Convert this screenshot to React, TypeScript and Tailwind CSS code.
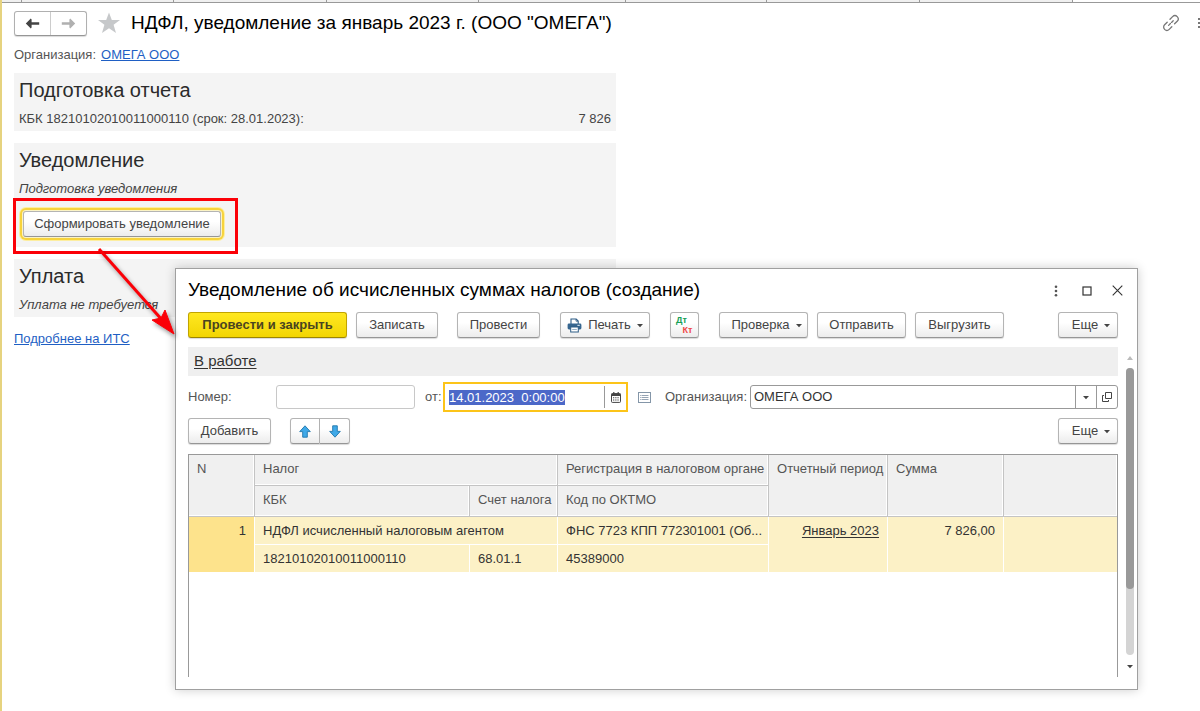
import { useEffect, useRef } from 'react'
import type { ReactNode } from 'react'

const tabs = [
    'w-5', 'w-[152px]', 'w-[153px]', 'w-[152px]',
    'w-[147px]', 'w-[141px]', 'w-[153px]', 'w-[153px]',
]

const buttonBase =
    'flex h-[26px] shrink-0 items-center justify-center rounded-[3px] border border-[#b4b4b4] border-b-[#969696] bg-linear-to-b from-white from-40% to-[#ececec] text-[#444]'

const raised = 'shadow-[0_1px_1px_rgba(0,0,0,0.15)]'

// Default button of the form: gold line inside a pale halo
const focused = 'shadow-[0_0_0_1px_#fbf3c4,0_0_0_3px_#f7d33c,0_0_0_4px_#fdeea0]'

function Button({ className = raised, label, children }: { className?: string; label?: string; children: ReactNode }) {
    return (
        <button type="button" aria-label={label} className={`${buttonBase} ${className}`}>
            {children}
        </button>
    )
}

function Caret() {
    return (
        <svg className="shrink-0" width="6" height="6" viewBox="0 0 6 6" aria-hidden="true">
            <path d="M0 2H6L3 5.2Z" fill="#444" />
        </svg>
    )
}

function NavArrow({ color, flip }: { color: string; flip?: boolean }) {
    return (
        <svg width="15" height="11" viewBox="0 0 15 11" className={flip ? 'rotate-180' : ''} aria-hidden="true">
            <path d="M0.8 5.5 5.8 0.6 6.6 1.4V4.2H14.2V6.8H6.6V9.6L5.8 10.4Z" fill={color} />
        </svg>
    )
}

function BlueArrow({ down }: { down?: boolean }) {
    return (
        <svg width="12" height="13" viewBox="0 0 12 13" className={down ? 'rotate-180' : ''} aria-hidden="true">
            <path d="M6 0.8 11.3 6.6H8.3V12.2H3.7V6.6H0.7Z" fill="#3fa9e8" stroke="#2077ad" strokeWidth="0.9" strokeLinejoin="round" />
        </svg>
    )
}

function Printer() {
    return (
        <svg width="15" height="15" viewBox="0 0 15 15" aria-hidden="true">
            <path d="M4 6V1H9.2L11.2 3V6" fill="#fff" stroke="#2d5c86" strokeWidth="1.1" />
            <path d="M9 1V3.2H11" fill="none" stroke="#2d5c86" strokeWidth="0.8" />
            <rect x="0.6" y="5.5" width="13.8" height="6" rx="1.4" fill="#35658f" />
            <rect x="10.4" y="6.8" width="2.4" height="1.1" fill="#d5e3ee" />
            <rect x="3.7" y="9" width="7.6" height="5" fill="#fff" stroke="#2d5c86" strokeWidth="1" />
            <path d="M5.2 11.5H9.8" stroke="#8da9c1" strokeWidth="0.9" />
        </svg>
    )
}

function Section({ title, className, children }: { title: string; className: string; children: ReactNode }) {
    return (
        <section className={`max-w-[602px] bg-[#f4f4f4] px-[5px] pt-[5px] ${className}`}>
            <h2 className="text-xl leading-6 text-[#2b2b2b]">{title}</h2>
            {children}
        </section>
    )
}

function Toolbar() {
    return (
        <div className="flex items-center pr-[19px]">
            <button type="button" className={`mr-[9px] h-[26px] w-[159px] rounded-[3px] border border-[#c1a400] border-b-[#9c8500] bg-linear-to-b from-[#ffe81f] to-[#f2d500] font-bold text-[#4a4420] ${raised}`}>
                Провести и закрыть
            </button>
            <Button className={`mr-[19px] w-[82px] ${raised}`}>Записать</Button>
            <Button className={`mr-5 w-[83px] ${raised}`}>Провести</Button>
            <Button className={`mr-5 w-[90px] gap-1.5 ${raised}`}>
                <Printer />
                Печать
                <Caret />
            </Button>
            <Button className={`mr-5 w-[29px] flex-col ${raised}`} label="Дт Кт">
                <span className="pr-1.5 text-[9px] leading-[10px] font-bold text-[#16a056]">Дт</span>
                <span className="pl-1.5 text-[9px] leading-[10px] font-bold text-[#ef4747]">Кт</span>
            </Button>
            <Button className={`mr-[9px] w-[89px] gap-1.5 pl-1.5 ${raised}`}>
                Проверка
                <Caret />
            </Button>
            <Button className={`mr-[9px] w-[89px] ${raised}`}>Отправить</Button>
            <Button className={`w-[89px] ${raised}`}>Выгрузить</Button>
            <Button className={`ml-auto w-[60px] gap-1.5 pl-1.5 ${raised}`}>
                Еще
                <Caret />
            </Button>
        </div>
    )
}

function Fields() {
    const dateRef = useRef<HTMLInputElement>(null)

    useEffect(() => {
        dateRef.current?.focus()
        dateRef.current?.select()
    }, [])

    return (
        <div className="flex h-[30px] items-center pr-[19px]">
            <label htmlFor="number" className="w-[88px] text-[#555]">Номер:</label>
            <input id="number" type="text" className="h-6 w-[139px] rounded-[3px] border border-[#c8c8c8] px-1 outline-none" />
            <label htmlFor="date" className="ml-2.5 w-[18px] text-[#555]">от:</label>
            <div className="flex h-[30px] w-[185px] items-center border-2 border-[#fcc419]">
                <input
                    id="date"
                    ref={dateRef}
                    type="text"
                    defaultValue="14.01.2023  0:00:00"
                    className="h-6 min-w-0 flex-1 pl-1 text-[#333] outline-none selection:bg-[#4c68c8] selection:text-white"
                />
                <button type="button" aria-label="Календарь" className="flex h-[22px] w-[22px] items-center justify-center border-l border-[#999]">
                    <svg width="10" height="11" viewBox="0 0 10 11" aria-hidden="true">
                        <rect x="0.5" y="1.6" width="9" height="8.8" rx="0.8" fill="#fff" stroke="#444" />
                        <path d="M0.5 1.6H9.5V4H0.5Z" fill="#444" />
                        <path d="M2.8 0V2.4M7.2 0V2.4" stroke="#444" strokeWidth="1.2" />
                        <path d="M2 5.8H8M2 8H8" stroke="#444" strokeWidth="1.1" strokeDasharray="1.3 0.9" />
                    </svg>
                </button>
            </div>
            <button type="button" aria-label="Список" className="ml-2.5 shrink-0">
                <svg width="13" height="11" viewBox="0 0 13 11" aria-hidden="true">
                    <rect x="0.5" y="0.5" width="12" height="10" fill="#fff" stroke="#8496a8" />
                    <path d="M3.5 3.5H10.5M3.5 5.5H10.5M3.5 7.5H10.5" stroke="#8a9aac" strokeWidth="0.9" />
                    <path d="M2 3.5H2.8M2 5.5H2.8M2 7.5H2.8" stroke="#8a9aac" strokeWidth="0.9" />
                </svg>
            </button>
            <label htmlFor="organization" className="ml-3.5 w-[85px] text-[#555]">Организация:</label>
            <div className="flex h-6 min-w-0 flex-1 rounded-[3px] border border-[#999]">
                <input id="organization" type="text" defaultValue="ОМЕГА ООО" className="min-w-0 flex-1 rounded-[3px] pl-[3px] text-[#333] outline-none" />
                <button type="button" aria-label="Выбрать" className="flex w-[21px] items-center justify-center border-l border-[#999]">
                    <Caret />
                </button>
                <button type="button" aria-label="Открыть" className="flex w-[21px] items-center justify-center border-l border-[#999]">
                    <svg width="10" height="10" viewBox="0 0 10 10" fill="none" stroke="#444" aria-hidden="true">
                        <path d="M3.5 0.5H9.5V6.5H3.5Z" />
                        <path d="M2 3.5H0.5V9.5H6.5V8" />
                    </svg>
                </button>
            </div>
        </div>
    )
}

const head = 'border-r border-b border-[#c4c4c4] bg-[#f0f0f0] pl-2 text-left align-top font-normal text-[#555] pt-1 leading-5 shadow-[inset_-1px_-1px_0_#fff]'
const cell = 'border-r border-b border-white bg-[#fcf1c6] pt-1 align-top leading-5 text-[#333]'

function TaxTable() {
    return (
        <div className="mr-[19px] h-[223px] overflow-hidden border border-b-0 border-[#999]">
            <table className="w-full table-fixed border-separate border-spacing-0 whitespace-nowrap">
                <colgroup>
                    <col className="w-[66px]" />
                    <col className="w-[215px]" />
                    <col className="w-[88px]" />
                    <col className="w-[211px]" />
                    <col className="w-[119px]" />
                    <col className="w-[116px]" />
                    <col />
                </colgroup>
                <thead>
                    <tr className="h-[31px]">
                        <th rowSpan={2} className={head}>N</th>
                        <th colSpan={2} className={head}>Налог</th>
                        <th className={head}>Регистрация в налоговом органе</th>
                        <th rowSpan={2} className={head}>Отчетный период</th>
                        <th rowSpan={2} className={head}>Сумма</th>
                        <th rowSpan={2} className={`${head} border-r-0`} />
                    </tr>
                    <tr className="h-[31px]">
                        <th className={head}>КБК</th>
                        <th className={head}>Счет налога</th>
                        <th className={head}>Код по ОКТМО</th>
                    </tr>
                </thead>
                <tbody>
                    <tr className="h-7">
                        <td rowSpan={2} className="border-r border-b border-white bg-[#fde38c] px-2 pt-1 text-right align-top leading-5 text-[#333]">1</td>
                        <td colSpan={2} className={`${cell} pl-2`}>НДФЛ исчисленный налоговым агентом</td>
                        <td className={`${cell} pl-2`}>ФНС 7723 КПП 772301001 (Об...</td>
                        <td rowSpan={2} className={`${cell} px-2 text-right`}>
                            <a href="#period" className="underline underline-offset-2">Январь 2023</a>
                        </td>
                        <td rowSpan={2} className={`${cell} px-2 text-right`}>7 826,00</td>
                        <td rowSpan={2} className={`${cell} border-r-0`} />
                    </tr>
                    <tr className="h-7">
                        <td className={`${cell} pl-2`}>18210102010011000110</td>
                        <td className={`${cell} pl-2`}>68.01.1</td>
                        <td className={`${cell} pl-2`}>45389000</td>
                    </tr>
                </tbody>
            </table>
        </div>
    )
}

function Dialog() {
    return (
        <div role="dialog" aria-labelledby="dialog-title" className="absolute top-[268px] right-[62px] left-[173px] border border-[#a0a0a0] bg-white pb-3 pl-3 shadow-[0_0_10px_rgba(0,0,0,0.2)]">
            <header className="flex h-[43px] items-center pr-[14px]">
                <h2 id="dialog-title" className="flex-1 text-[19px] text-black">Уведомление об исчисленных суммах налогов (создание)</h2>
                <button type="button" aria-label="Меню" className="mr-6">
                    <svg width="4" height="12" viewBox="0 0 4 12" fill="#555" aria-hidden="true">
                        <circle cx="2" cy="1.8" r="1.3" />
                        <circle cx="2" cy="6" r="1.3" />
                        <circle cx="2" cy="10.2" r="1.3" />
                    </svg>
                </button>
                <button type="button" aria-label="Развернуть" className="mr-5">
                    <svg width="10" height="10" viewBox="0 0 10 10" aria-hidden="true">
                        <rect x="1" y="1" width="8" height="8" fill="none" stroke="#333" strokeWidth="1.2" />
                    </svg>
                </button>
                <button type="button" aria-label="Закрыть">
                    <svg width="11" height="11" viewBox="0 0 11 11" aria-hidden="true">
                        <path d="M0.7 0.7 10.3 10.3M10.3 0.7 0.7 10.3" stroke="#333" strokeWidth="1.1" />
                    </svg>
                </button>
            </header>
            <Toolbar />
            <div className="relative">
                <div className="mt-[9px] mr-[19px] flex h-[29px] items-center bg-[#efefef] px-1.5">
                    <a href="#status" className="text-[15px] text-[#333] underline underline-offset-2">В работе</a>
                </div>
                <div className="mt-1.5">
                    <Fields />
                </div>
                <div className="mt-1.5 mb-2.5 flex pr-[19px]">
                    <Button className={`w-[83px] ${raised}`}>Добавить</Button>
                    <div className="ml-[19px] flex">
                        <Button className={`w-[30px] rounded-r-none ${raised}`} label="Вверх"><BlueArrow /></Button>
                        <Button className={`w-[30px] rounded-l-none border-l-0 ${raised}`} label="Вниз"><BlueArrow down /></Button>
                    </div>
                    <Button className={`ml-auto w-[60px] gap-1.5 pl-1.5 ${raised}`}>
                        Еще
                        <Caret />
                    </Button>
                </div>
                <TaxTable />
                {/* Scrollbar */}
                <div className="absolute top-[9px] right-[3px] bottom-2 flex w-2 flex-col items-center">
                    <svg width="6" height="4" viewBox="0 0 6 4" aria-hidden="true">
                        <path d="M3 0 6 4H0Z" fill="#bbb" />
                    </svg>
                    <div className="my-2 w-2 flex-1 rounded-full bg-[#d4d4d4]">
                        <div className="h-[77%] rounded-full bg-[#999]" />
                    </div>
                    <Caret />
                </div>
            </div>
        </div>
    )
}

function App() {
    return (
        <div className="relative min-h-screen overflow-hidden border-l-2 border-[#e6d37f] bg-white font-['Liberation_Sans',Arial,sans-serif] text-[13px]">
            {/* Bottom edge of the window tabs */}
            <div className="flex h-[3px] border-b border-[#999] bg-[#f0f0f0]">
                {tabs.map((width, i) => (
                    <div key={i} className={`${width} shrink-0 border-r border-[#999]`} />
                ))}
                <div className="flex-1 bg-white" />
            </div>

            <main className="pl-3">
                <header className="flex h-10 items-center">
                    <div className={`flex h-[25px] rounded-[3px] border border-[#b0b0b0] border-b-[#969696] ${raised}`}>
                        <button type="button" aria-label="Назад" className="flex w-9 items-center justify-center border-r border-[#ccc]">
                            <NavArrow color="#444" />
                        </button>
                        <button type="button" aria-label="Вперед" className="flex w-[35px] items-center justify-center">
                            <NavArrow color="#b0b0b0" flip />
                        </button>
                    </div>
                    <button type="button" aria-label="В избранное" className="ml-2.5">
                        <svg width="24" height="22" viewBox="0 0 24 22" aria-hidden="true">
                            <path d="M12 0.5 14.8 8H23L16.6 12.8 19 21 12 16.2 5 21 7.4 12.8 1 8H9.2Z" fill="#c6c8ca" />
                        </svg>
                    </button>
                    <h1 className="ml-2.5 flex-1 text-[19px] text-black">НДФЛ, уведомление за январь 2023 г. (ООО "ОМЕГА")</h1>
                    <button type="button" aria-label="Ссылка" className="mr-[18px]">
                        <svg width="18" height="18" viewBox="0 0 18 18" fill="none" stroke="#777" strokeWidth="1.3" strokeLinecap="round" aria-hidden="true">
                            <path d="M8 5.2 10.6 2.6A3.2 3.2 0 0 1 15.2 7.2L12.6 9.8" />
                            <path d="M9.8 12.8 7.2 15.4A3.2 3.2 0 0 1 2.6 10.8L5.2 8.2" />
                            <path d="M6.6 11.4 11.2 6.8" strokeDasharray="2.6 1.6" />
                        </svg>
                    </button>
                    <div className="flex w-0.5 flex-col gap-0.5">
                        <span className="h-0.5 bg-[#777]" />
                        <span className="h-0.5 bg-[#777]" />
                        <span className="h-0.5 bg-[#777]" />
                    </div>
                </header>

                <div className="flex h-6 items-center gap-[5px] text-[#555]">
                    Организация:
                    <a href="#organization" className="text-[#1f5fc4] underline">ОМЕГА ООО</a>
                </div>

                <Section title="Подготовка отчета" className="mt-1.5 h-[58px]">
                    <div className="mt-[7px] flex justify-between leading-5 text-[#444]">
                        <span>КБК 18210102010011000110 (срок: 28.01.2023):</span>
                        <span>7 826</span>
                    </div>
                </Section>

                <Section title="Уведомление" className="mt-3 h-[104px]">
                    <p className="mt-[7px] leading-5 text-[#444] italic">Подготовка уведомления</p>
                    <Button className={`mt-3 ml-1 w-[198px] ${focused}`}>Сформировать уведомление</Button>
                </Section>

                <Section title="Уплата" className="mt-3 h-[58px]">
                    <p className="mt-[7px] leading-5 text-[#444] italic">Уплата не требуется</p>
                </Section>

                <a href="#its" className="mt-3 inline-block leading-5 text-[#1f5fc4] underline">Подробнее на ИТС</a>
            </main>

            <Dialog />

            {/* Callout: highlighted button and the window it opens */}
            <div className="pointer-events-none absolute top-[198px] left-[11px] h-14 w-[225px] border-[3px] border-[#fb0007]" />
            <svg className="pointer-events-none absolute top-[244px] left-[90px] drop-shadow-[2px_3px_2px_rgba(0,0,0,0.4)]" width="90" height="96" viewBox="0 0 90 96" aria-hidden="true">
                <path d="M7 5 71 77" stroke="#fb0007" strokeWidth="3" />
                <path d="M82 90 60 76 69 74 73 66Z" fill="#fb0007" stroke="#fb0007" strokeLinejoin="round" />
            </svg>
        </div>
    )
}

export default App
